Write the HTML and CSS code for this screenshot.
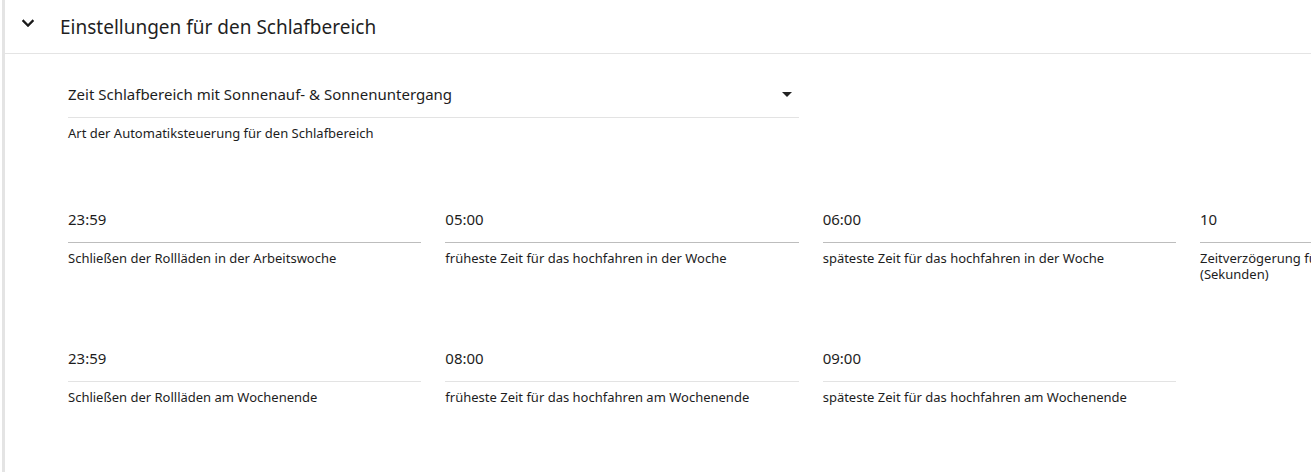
FILE: index.html
```html
<!DOCTYPE html>
<html lang="de">
<head>
<meta charset="utf-8">
<title>Einstellungen für den Schlafbereich</title>
<link rel="stylesheet" href="styles.css">
</head>
<body>
<section class="panel">
  <header class="panel-header">
    <svg class="chevron" viewBox="0 0 24 24" width="24" height="24"><path d="M16.59 8.59L12 13.17 7.41 8.59 6 10l6 6 6-6z"/></svg>
    <h2 class="panel-title">Einstellungen für den Schlafbereich</h2>
  </header>
  <div class="panel-body">
    <div class="select-block">
      <div class="field">
        <div class="input select-input input-light">
          <span>Zeit Schlafbereich mit Sonnenauf- &amp; Sonnenuntergang</span>
          <svg class="drop" viewBox="0 0 10 5" width="10" height="5"><path d="M0 0l5 5 5-5z"/></svg>
        </div>
        <div class="hint">Art der Automatiksteuerung für den Schlafbereich</div>
      </div>
    </div>
    <div class="grid">
      <div class="field">
        <div class="input input-mid">23:59</div>
        <div class="hint">Schließen der Rollläden in der Arbeitswoche</div>
      </div>
      <div class="field">
        <div class="input input-mid">05:00</div>
        <div class="hint">früheste Zeit für das hochfahren in der Woche</div>
      </div>
      <div class="field">
        <div class="input input-mid">06:00</div>
        <div class="hint">späteste Zeit für das hochfahren in der Woche</div>
      </div>
      <div class="field">
        <div class="input input-mid">10</div>
        <div class="hint">Zeitverzögerung für Sonnenaufgang<br>(Sekunden)</div>
      </div>
      <div class="field">
        <div class="input input-light">23:59</div>
        <div class="hint">Schließen der Rollläden am Wochenende</div>
      </div>
      <div class="field">
        <div class="input input-light">08:00</div>
        <div class="hint">früheste Zeit für das hochfahren am Wochenende</div>
      </div>
      <div class="field">
        <div class="input input-light">09:00</div>
        <div class="hint">späteste Zeit für das hochfahren am Wochenende</div>
      </div>
    </div>
  </div>
</section>
</body>
</html>
```

FILE: styles.css
```css
html, body {
  margin: 0;
  padding: 0;
  background: #ffffff;
  overflow: hidden;
}
body {
  width: 1311px;
  height: 472px;
  font-family: "Noto Sans", "Open Sans", sans-serif;
  color: #1d1d1d;
}
.panel {
  margin-left: 2px;
  border-left: 3px solid #e4e4e4;
  height: 472px;
  box-sizing: border-box;
  overflow: hidden;
}
.panel-header {
  height: 53px;
  border-bottom: 1px solid #e4e4e4;
  display: flex;
  align-items: center;
  padding-left: 11px;
}
.chevron {
  fill: #1a1a1a;
  stroke: #1a1a1a;
  stroke-width: 0.4;
  flex: none;
  align-self: flex-start;
  margin-top: 11px;
}
.panel-title {
  margin: 0 0 0 20px;
  font-size: 19px;
  font-weight: 400;
  line-height: 24px;
  color: #1f1f1f;
}
.panel-body {
  padding: 19px 0 0 63px;
}
.select-block {
  width: 731px;
}
.field {
  display: flex;
  flex-direction: column;
  min-width: 0;
}
.input {
  padding: 11px 0 13px 0;
  line-height: 20px;
  font-size: 15px;
  border-bottom: 1px solid #e0e0e0;
  white-space: nowrap;
}
.input-mid {
  border-bottom-color: #bdbdbd;
}
.input-light {
  border-bottom-color: #e3e3e3;
}
.select-input {
  display: flex;
  align-items: center;
  justify-content: space-between;
}
.drop {
  fill: #222;
  margin-right: 7px;
  flex: none;
}
.hint {
  margin-top: 7px;
  font-size: 13px;
  line-height: 16px;
  color: #1d1d1d;
}
.grid {
  margin-top: 57px;
  display: grid;
  grid-template-columns: repeat(4, 353.33px);
  column-gap: 24px;
  row-gap: 55px;
  align-items: start;
}
```
